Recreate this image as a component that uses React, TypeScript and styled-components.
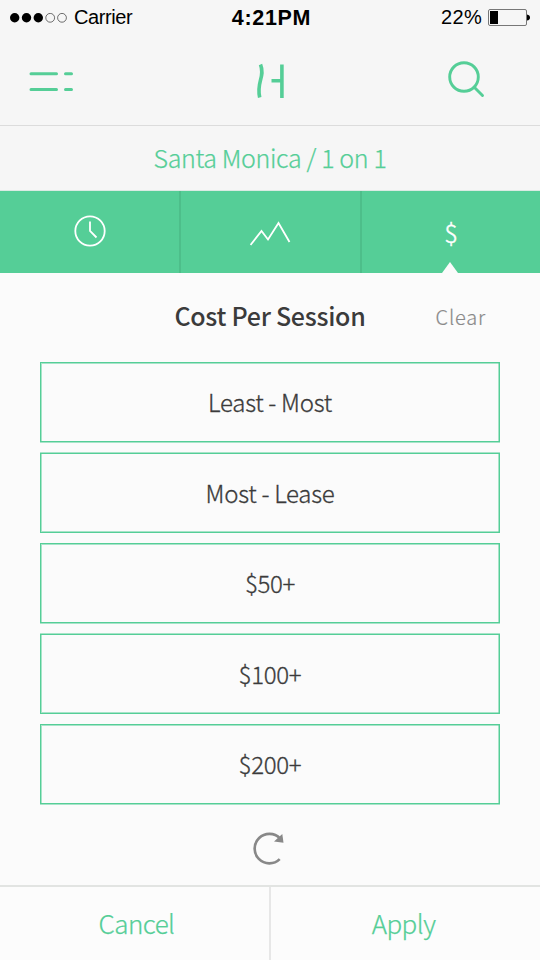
import React from "react";
import styled, { createGlobalStyle } from "styled-components";

const green = "#55ce97";
const greenSoft = "rgba(85, 206, 151, 0.5)";

const GlobalStyle = createGlobalStyle`
  * { box-sizing: border-box; }
  body { margin: 0; background: #fbfbfb; }
  button { margin: 0; padding: 0; border: 0; background: none; font: inherit; color: inherit; }
  svg { display: block; }
`;

const Screen = styled.main`
  display: flex;
  flex-direction: column;
  width: 540px;
  height: 960px;
  overflow: hidden;
  background: #fbfbfb;
  color: #3b3b3b;
  font-family: "Noto Sans CJK SC", "Noto Sans", sans-serif;
  font-weight: 300;
`;

const StatusBar = styled.div`
  display: grid;
  grid-template-columns: 1fr auto 1fr;
  align-items: center;
  height: 35px;
  padding: 0 10px;
  background: #f6f6f6;
  color: #000;
  font: 400 20px/35px "Liberation Sans", Arial, sans-serif;
`;

const Signal = styled.div`
  display: flex;
  align-items: center;
  gap: 7px;
`;

const Carrier = styled.span`
  letter-spacing: -0.4px;
`;

const Time = styled.span`
  padding: 2px 0 0 3px;
  font-weight: 700;
  font-size: 21.5px;
  line-height: 33px;
  letter-spacing: 0.7px;
`;

const Power = styled.div`
  display: flex;
  align-items: center;
  justify-content: flex-end;
  gap: 6px;
`;

const Percent = styled.span`
  letter-spacing: 0.3px;
`;

const NavBar = styled.header`
  display: grid;
  grid-template-columns: 1fr auto 1fr;
  align-items: center;
  height: 91px;
  padding: 3px 54px 0 28px;
  background: #f6f6f6;
  border-bottom: 1px solid #dcdcdc;
`;

const LogoSlot = styled.div`
  padding: 0 0 2px 27px;
`;

const SearchButton = styled.button`
  justify-self: end;
  padding-bottom: 6px;
`;

const Location = styled.div`
  height: 65px;
  background: #f6f6f6;
  border-bottom: 1px solid #dbeae3;
  color: ${green};
  font-size: 25px;
  line-height: 62px;
  letter-spacing: -0.35px;
  text-align: center;
  -webkit-text-stroke: 0.25px;
`;

const Tabs = styled.nav`
  display: grid;
  grid-template-columns: 181px 181px 178px;
  height: 82px;
  background: ${green};
  color: #fff;
`;

const Tab = styled.button`
  position: relative;
  display: flex;
  align-items: center;
  justify-content: center;
  padding: 0 0 1px 0;
  font-size: 25px;
  -webkit-text-stroke: 0.4px;
  &:not(:last-child) { padding-bottom: 2px; border-right: 2px solid #4dbe8a; }
`;

const Pointer = styled.svg`
  position: absolute;
  left: 79px;
  bottom: 0;
`;

const TitleRow = styled.div`
  display: grid;
  grid-template-columns: 1fr auto 1fr;
  align-items: center;
  height: 89px;
  padding: 0 54px 5px;
`;

const Title = styled.h1`
  grid-column: 2;
  margin: 0;
  font-size: 25px;
  font-weight: 500;
  line-height: 36px;
  letter-spacing: -0.28px;
`;

const Clear = styled.button`
  justify-self: end;
  padding-top: 3px;
  color: #898989;
  font-size: 20px;
  letter-spacing: 0.8px;
  -webkit-text-stroke: 0.2px;
`;

const Options = styled.div`
  display: flex;
  flex-direction: column;
  padding: 0 40px;
`;

const Option = styled.button`
  height: 80px;
  border: 1px solid ${green};
  color: #3b3b3b;
  font-size: 24px;
  line-height: 78px;
  letter-spacing: -0.28px;
  text-align: center;
  -webkit-text-stroke: 0.3px;
  &:nth-child(odd) {
    margin-bottom: 11px;
    box-shadow: inset 1px 1px ${greenSoft}, inset -1px 0 ${greenSoft}, 0 1px ${greenSoft};
  }
  &:nth-child(even) {
    margin-bottom: 10px;
    box-shadow: inset 1px -1px ${greenSoft}, inset -1px 0 ${greenSoft}, 0 -1px ${greenSoft};
  }
`;

const Reset = styled.button`
  display: flex;
  align-items: center;
  justify-content: center;
  height: 70px;
  padding-bottom: 2px;
`;

const Footer = styled.footer`
  display: grid;
  grid-template-columns: 271px 269px;
  height: 75px;
  background: #fcfcfc;
  border-top: 2px solid #e2e4e2;
`;

const Action = styled.button`
  padding: 0 4px 2px 0;
  color: ${green};
  font-size: 26px;
  line-height: 71px;
  letter-spacing: -0.55px;
  -webkit-text-stroke: 0.25px;
  &:first-child {
    padding: 0 0 2px 4px;
    border-right: 2px solid #e7e7e7;
  }
`;

const options = ["Least - Most", "Most - Lease", "$50+", "$100+", "$200+"];

const SignalDots = () => (
  <svg width="57" height="10" viewBox="0 0 57 10">
    {[4.7, 16.5, 28.3].map((x) => <circle key={x} cx={x} cy="4.8" r="4.7" fill="#000" />)}
    {[40.2, 52].map((x) => <circle key={x} cx={x} cy="4.8" r="4.4" fill="none" stroke="#333" strokeWidth="0.7" />)}
  </svg>
);

const Battery = () => (
  <svg width="42" height="17" viewBox="0 0 42 17">
    <rect x="0.5" y="0.5" width="38" height="16" rx="1.5" fill="none" stroke="#777" />
    <rect x="2" y="2" width="8" height="13" fill="#000" />
    <path d="M39 5.5 Q42 6 42 8.5 Q42 11 39 11.5Z" fill="#000" />
  </svg>
);

const MenuIcon = () => (
  <svg width="46" height="22" viewBox="0 0 46 22" stroke={green} strokeWidth="3" strokeLinecap="round">
    <path d="M3 2.800H28.500M37.500 2.800H43.500M3 18.500H28.500M37.500 18.500H43.500" />
  </svg>
);

const Logo = () => (
  <svg width="30" height="36" viewBox="0 0 30 36" fill="none" stroke={green} strokeWidth="3.6">
    <path d="M4.500 1.500C9.500 14 0 19 3.700 34.500M25.900 1.500V35M15.500 17.800H26" />
  </svg>
);

const SearchIcon = () => (
  <svg width="40" height="40" viewBox="0 0 40 40" fill="none" stroke={green} strokeWidth="2.9" strokeLinecap="round">
    <circle cx="18" cy="18" r="14.300" />
    <path d="M28.500 28.500L36.500 36.500" />
  </svg>
);

const ClockIcon = () => (
  <svg width="32" height="32" viewBox="0 0 32 32" fill="none" stroke="#fff" strokeWidth="1.8">
    <circle cx="16" cy="16" r="14.700" />
    <path d="M16 6.500V16L22.500 22.500" />
  </svg>
);

const TrendIcon = () => (
  <svg width="42" height="30" viewBox="0 0 42 30" fill="none" stroke="#fff" strokeWidth="1.8">
    <path d="M0.500 29L11.500 15L18 23.500L28.500 7L39.500 26" />
  </svg>
);

const ResetIcon = () => (
  <svg width="34" height="36" viewBox="0 0 34 36" fill="none" stroke="#888" strokeWidth="2.700">
    <path d="M27 7.500A14.700 14.700 0 1 0 26.700 28.100" />
    <path d="M29.300 3L30.500 11.700L21 10.600Z" fill="#888" stroke="none" />
  </svg>
);

export default function App() {
  return (
    <>
      <GlobalStyle />
      <Screen>
        <StatusBar>
          <Signal><SignalDots /><Carrier>Carrier</Carrier></Signal>
          <Time>4:21PM</Time>
          <Power><Percent>22%</Percent><Battery /></Power>
        </StatusBar>
        <NavBar>
          <MenuIcon />
          <LogoSlot><Logo /></LogoSlot>
          <SearchButton aria-label="Search"><SearchIcon /></SearchButton>
        </NavBar>
        <Location>Santa Monica / 1 on 1</Location>
        <Tabs>
          <Tab aria-label="Time"><ClockIcon /></Tab>
          <Tab aria-label="Level"><TrendIcon /></Tab>
          <Tab>
            $
            <Pointer width="18" height="11" viewBox="0 0 18 11"><path d="M1 11L9 0L17 11Z" fill="#fbfbfb" /></Pointer>
          </Tab>
        </Tabs>
        <TitleRow>
          <Title>Cost Per Session</Title>
          <Clear>Clear</Clear>
        </TitleRow>
        <Options>
          {options.map((label) => <Option key={label}>{label}</Option>)}
        </Options>
        <Reset aria-label="Reset"><ResetIcon /></Reset>
        <Footer>
          <Action>Cancel</Action>
          <Action>Apply</Action>
        </Footer>
      </Screen>
    </>
  );
}
